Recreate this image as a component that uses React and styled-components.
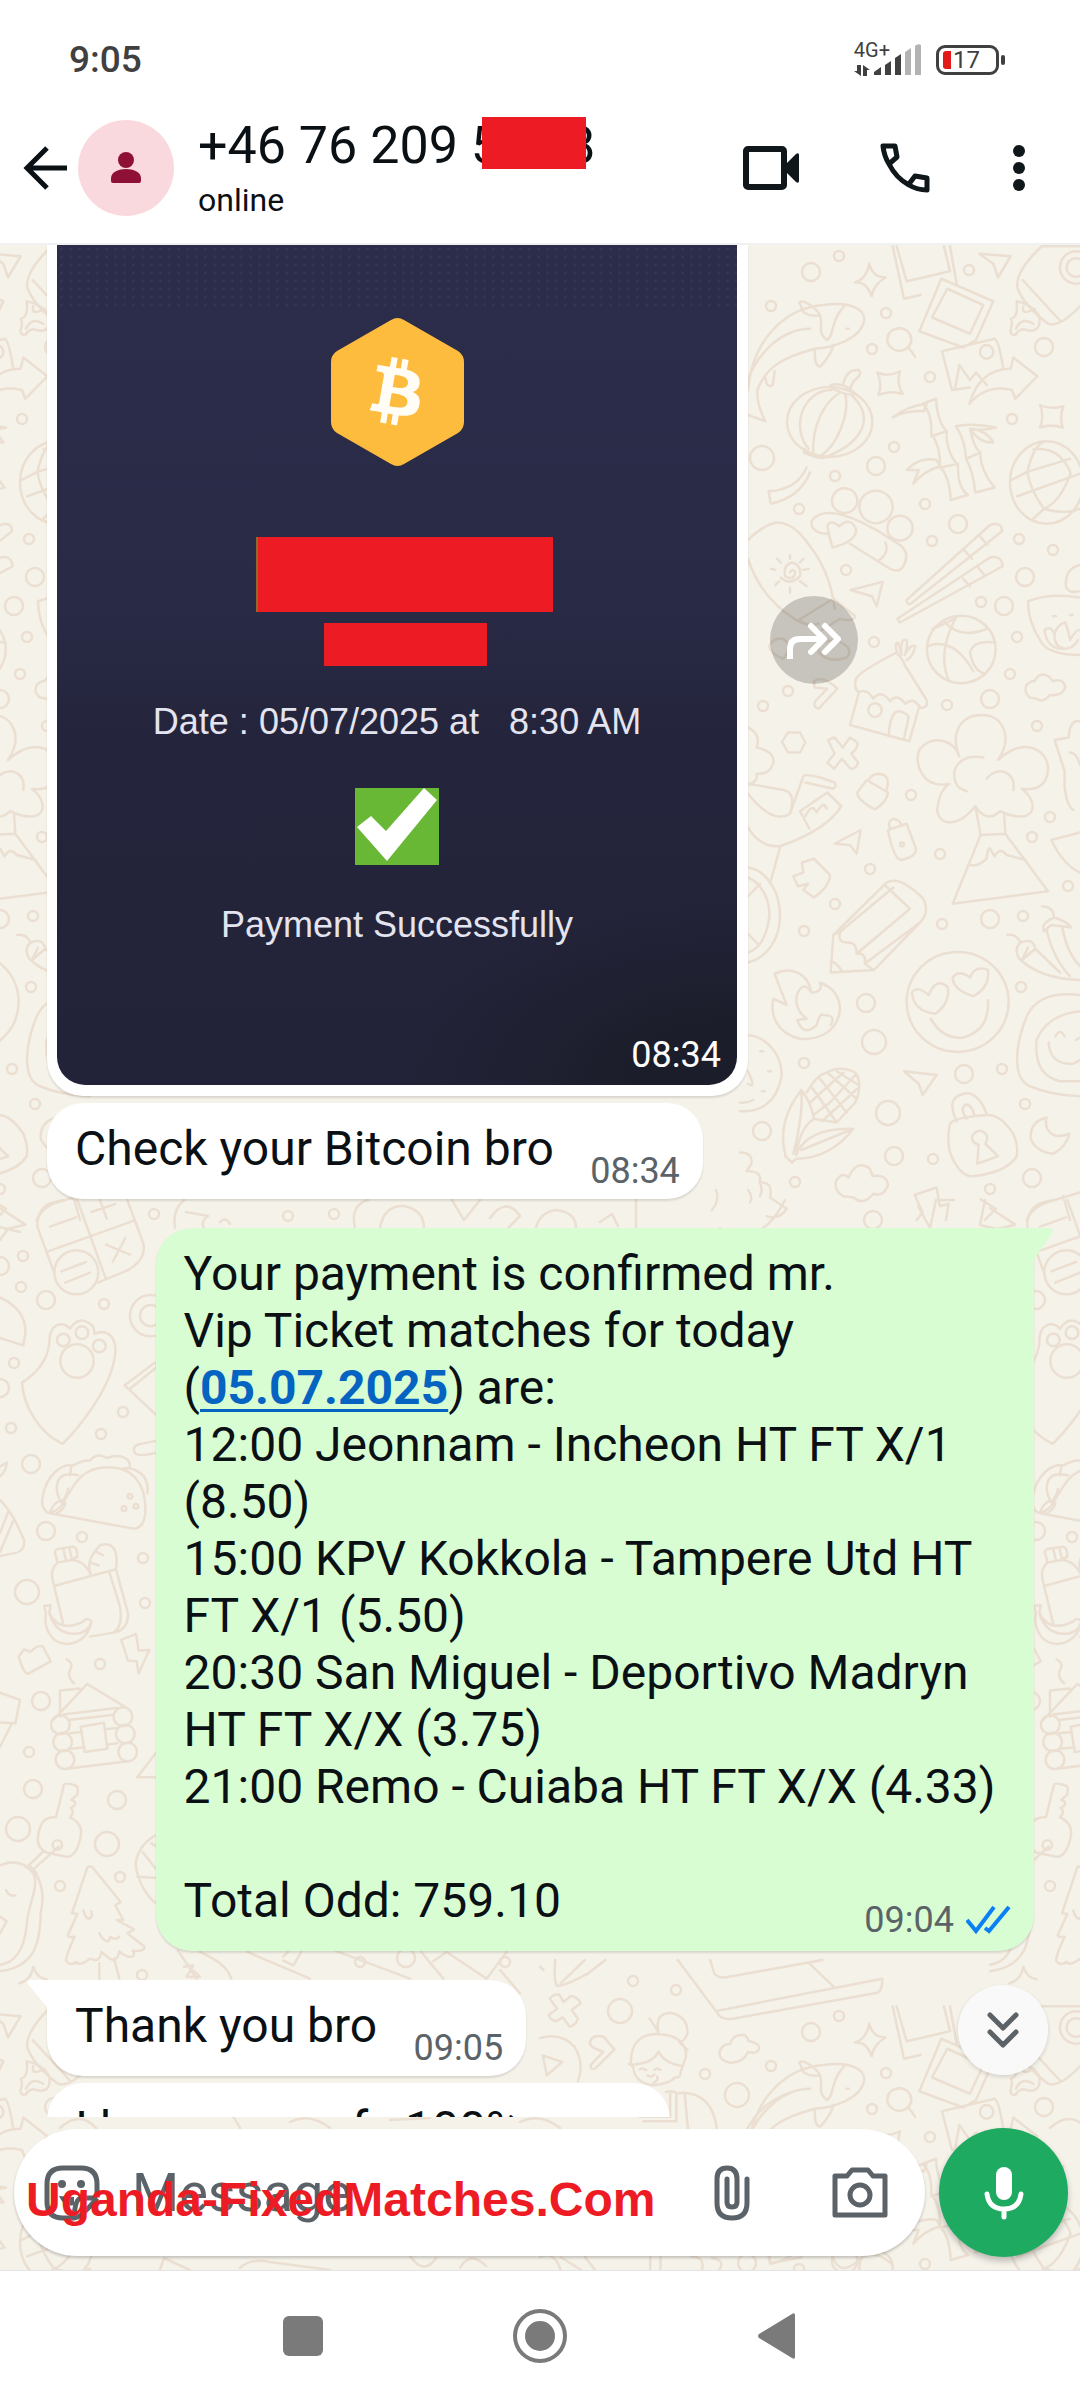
import React from "react";
import styled, { createGlobalStyle, css } from "styled-components";
import { FaBitcoin } from "react-icons/fa";

const GlobalStyle = createGlobalStyle`
  *, *::before, *::after {
    box-sizing: border-box;
  }
  body {
    margin: 0;
    background: #ffffff;
    color: #0b1014;
    font-family: Roboto, "Noto Sans", sans-serif;
  }
  button {
    display: flex;
    align-items: center;
    justify-content: center;
    padding: 0;
    border: none;
    background: transparent;
    color: inherit;
    font: inherit;
    cursor: pointer;
  }
  svg {
    display: block;
    flex-shrink: 0;
  }
`;

const Screen = styled.div`
  display: flex;
  flex-direction: column;
  height: 100vh;
  overflow: hidden;
`;

/* ---------- status bar ---------- */

const StatusBar = styled.div`
  display: flex;
  align-items: center;
  justify-content: space-between;
  height: 91px;
  padding: 28px 75px 0 69px;
  color: #404040;
`;

const Clock = styled.time`
  font-size: 37px;
  font-weight: 500;
  line-height: 40px;
`;

const StatusIcons = styled.div`
  display: flex;
  align-items: center;
  gap: 14px;
`;

const Signal = styled.div`
  display: flex;
  align-items: flex-end;
  gap: 2px;
`;

const Network = styled.div`
  display: flex;
  flex-direction: column;
  gap: 5px;
  margin: -8px -18px 0 0;
  font-size: 20px;
  line-height: 20px;
`;

const Battery = styled.div`
  position: relative;
  display: flex;
  align-items: center;
  gap: 2px;
  width: 63px;
  height: 30px;
  margin-right: 6px;
  padding-left: 4px;
  border: 3px solid #404040;
  border-radius: 9px;
  font-size: 24px;
  line-height: 24px;

  &::before {
    content: "";
    width: 8px;
    height: 18px;
    border-radius: 3px 0 0 3px;
    background: #e21b1b;
  }
  &::after {
    content: "";
    position: absolute;
    right: -9px;
    top: 7px;
    width: 4px;
    height: 10px;
    border-radius: 2px;
    background: #404040;
  }
`;

/* ---------- header ---------- */

const Header = styled.header`
  display: flex;
  align-items: center;
  height: 154px;
  padding: 2px 55px 0 22px;
  border-bottom: 2px solid #f0f1f2;
`;

const Avatar = styled.div`
  display: flex;
  align-items: center;
  justify-content: center;
  width: 96px;
  height: 96px;
  margin: 0 24px 0 10px;
  border-radius: 50%;
  background: #fad9de;
  color: #8f1036;
`;

const Contact = styled.div`
  display: flex;
  flex-direction: column;
  gap: 4px;
`;

const ContactName = styled.h1`
  display: flex;
  align-items: flex-start;
  margin: 0;
  font-size: 52px;
  font-weight: 400;
  line-height: 60px;
  white-space: pre;
`;

const Presence = styled.span`
  font-size: 32px;
  line-height: 40px;
`;

const Actions = styled.div`
  display: flex;
  align-items: center;
  gap: 79px;
  margin-left: auto;
`;

const Redaction = styled.span`
  display: block;
  width: ${props => props.$width}px;
  height: ${props => props.$height}px;
  background: #ed1c24;
  ${props =>
    props.$overlap &&
    css`
      position: relative;
      margin: 1px -20px 0 -18px;
      z-index: 1;
    `}
`;

/* ---------- conversation ---------- */

const Chat = styled.main`
  position: relative;
  display: flex;
  flex: 1;
  flex-direction: column;
  min-height: 0;
  background: #f5f2ea;
`;

const Wallpaper = styled.svg`
  position: absolute;
  inset: 0;
  width: 100%;
  height: 100%;
  fill: none;
  stroke: #ebdfd1;
  stroke-width: 2.5;
  stroke-linecap: round;
  stroke-linejoin: round;

  path,
  circle,
  ellipse {
    vector-effect: non-scaling-stroke;
  }
`;

const Messages = styled.div`
  position: relative;
  flex: 1;
  min-height: 0;
  padding: 0 46px 0 47px;
  overflow: hidden;
`;

const Row = styled.div`
  display: flex;
  align-items: center;
  justify-content: ${props => (props.$own ? "flex-end" : "flex-start")};
  gap: 22px;
  margin-top: ${props => (props.$first ? 29 : 7)}px;

  &:first-child {
    margin-top: 0;
  }
`;

const Bubble = styled.div`
  position: relative;
  max-width: 89%;
  padding: 17px 23px 22px 28px;
  border-radius: 36px;
  background: ${props => (props.$own ? "#d8fdd2" : "#ffffff")};
  box-shadow: 0 2px 2px rgba(60, 50, 40, 0.14);
  font-size: 48px;
  line-height: 57px;
  ${props =>
    props.$tail &&
    (props.$own
      ? "border-top-right-radius: 0;"
      : "border-top-left-radius: 0;")}
`;

const Tail = styled.svg`
  position: absolute;
  top: 0;
  ${props => (props.$own ? "left: 100%;" : "right: 100%;")}
`;

const Text = styled.p`
  margin: 0;
  white-space: pre-line;

  a {
    color: #0563c1;
    font-weight: 700;
    text-decoration-thickness: 3px;
    text-underline-offset: 5px;
  }
`;

// keeps the last line clear of the time stamp
const MetaSpace = styled.span`
  display: inline-block;
  width: ${props => (props.$own ? 186 : 126)}px;
`;

const Meta = styled.span`
  position: absolute;
  right: 23px;
  bottom: ${props => (props.$own ? 10 : 7)}px;
  display: flex;
  align-items: center;
  gap: 12px;
  color: #5b6368;
  font-size: 36px;
  line-height: 42px;
`;

const PhotoBubble = styled.div`
  width: 701px;
  padding: 0 11px 11px 10px;
  border-radius: 0 0 36px 36px;
  background: #ffffff;
  box-shadow: 0 2px 2px rgba(60, 50, 40, 0.14);
`;

const Receipt = styled.div`
  position: relative;
  display: flex;
  flex-direction: column;
  align-items: center;
  padding: 72px 0 136px;
  border-radius: 0 0 28px 28px;
  background:
    radial-gradient(ellipse 340px 190px at 100% 100%, #1c1d2a 30%, transparent),
    linear-gradient(#2c2d4a, #292a46 42%, #24253c 58%, #222338);
  color: #e4e4f0;
  font-family: "Liberation Sans", Arial, sans-serif;
  font-size: 36px;
  line-height: 48px;
  white-space: pre;

  &::before {
    content: "";
    position: absolute;
    inset: 0 0 auto;
    height: 66px;
    background: radial-gradient(#4a4b68 1px, transparent 2px) 0 0 / 9px 8px;
    opacity: 0.3;
  }
`;

const Coin = styled.div`
  position: relative;
  display: flex;
  align-items: center;
  justify-content: center;
  width: 133px;
  height: 150px;

  svg {
    position: absolute;
  }
  svg:last-child {
    transform: rotate(-4deg);
  }
`;

const Hidden = styled.div`
  display: flex;
  flex-direction: column;
  align-items: center;
  gap: 11px;
  margin: 70px 0 32px;
  padding-left: 17px;

  span:first-child {
    box-shadow: -2px 0 0 0 #8a6b2c;
  }
`;

const PhotoCheck = styled.div`
  margin: 42px 0 36px;
`;

const PhotoTime = styled.time`
  position: absolute;
  right: 16px;
  bottom: 9px;
  color: #ffffff;
  font-family: Roboto, sans-serif;
  font-size: 36px;
  line-height: 42px;
`;

const ForwardButton = styled.button`
  width: 88px;
  height: 88px;
  margin-bottom: 62px;
  border-radius: 50%;
  background: rgba(0, 0, 0, 0.19);
  color: #ffffff;
`;

const ScrollButton = styled.button`
  position: absolute;
  right: 32px;
  bottom: 42px;
  width: 90px;
  height: 90px;
  border-radius: 50%;
  background: rgba(250, 250, 250, 0.93);
  box-shadow: 0 2px 4px rgba(0, 0, 0, 0.14);
  color: #5b6368;
`;

/* ---------- composer ---------- */

const Composer = styled.form`
  position: relative;
  display: flex;
  align-items: center;
  gap: 14px;
  padding: 11px 12px 13px 14px;
  color: #5b6368;
`;

const Field = styled.div`
  display: flex;
  flex: 1;
  align-items: center;
  min-width: 0;
  height: 127px;
  padding: 0 37px 0 30px;
  border-radius: 64px;
  background: #ffffff;
  box-shadow: 0 2px 3px rgba(0, 0, 0, 0.2);
`;

const MessageInput = styled.input`
  flex: 1;
  min-width: 0;
  margin-left: 32px;
  padding: 0;
  border: none;
  outline: none;
  background: transparent;
  color: #0b1014;
  font-family: inherit;
  font-size: 54px;
  line-height: 60px;

  &::placeholder {
    color: #5b6368;
    opacity: 1;
  }
`;

const FieldActions = styled.div`
  display: flex;
  align-items: center;
  gap: 82px;
`;

const MicButton = styled.button`
  && {
    width: 129px;
    height: 129px;
    border-radius: 50%;
    background: #1faa61;
    box-shadow: 0 4px 6px rgba(0, 0, 0, 0.24);
    color: #ffffff;
  }
`;

const Watermark = styled.span`
  position: absolute;
  left: 26px;
  bottom: 43px;
  color: #ed1c24;
  font-family: "Liberation Sans", Arial, sans-serif;
  font-size: 48px;
  font-weight: 700;
  line-height: 54px;
  pointer-events: none;
`;

/* ---------- system navigation ---------- */

const NavBar = styled.nav`
  display: flex;
  align-items: center;
  justify-content: center;
  gap: 177px;
  height: 130px;
  border-top: 1px solid #e4e4e4;
  color: #7a7a7a;

  button {
    width: 60px;
    height: 60px;
  }
`;

/* ---------- wallpaper drawing ---------- */

const dots = [
  [811, 272, 9], [839, 256, 5], [771, 306, 5], [886, 313, 5], [969, 270, 5],
  [872, 349, 5], [1044, 347, 9], [930, 377, 5], [1012, 419, 5], [762, 458, 12],
  [876, 466, 9], [894, 447, 5], [835, 476, 5], [799, 509, 5], [925, 504, 5],
  [958, 524, 9], [932, 541, 5], [1019, 539, 5], [1053, 550, 5], [1025, 577, 9],
  [846, 570, 5], [981, 602, 5], [1004, 606, 9], [1017, 637, 5], [1010, 674, 5],
  [874, 642, 5], [947, 705, 5], [990, 699, 9], [1037, 726, 5], [788, 691, 5],
  [763, 706, 5], [911, 795, 5], [1050, 817, 5], [1032, 837, 5], [940, 854, 5],
  [870, 869, 5], [1068, 886, 5], [835, 904, 5], [804, 931, 5], [942, 924, 5],
  [990, 919, 9], [1023, 916, 5], [1021, 987, 5], [866, 1003, 9], [874, 1042, 12],
  [804, 1063, 5], [964, 1074, 9], [1002, 1069, 5], [888, 1113, 12], [762, 1131, 9],
  [1025, 1104, 5], [894, 1156, 9], [933, 1159, 5], [1032, 1178, 9], [795, 1182, 5],
  [990, 1189, 5], [154, 1214, 5], [23, 1256, 5], [21, 1287, 5], [46, 1300, 9],
  [104, 1304, 5], [14, 1363, 5], [123, 1412, 5], [11, 1428, 5], [101, 1434, 5],
  [31, 1464, 9], [46, 1531, 9], [82, 1537, 5], [143, 1558, 5], [27, 1592, 12],
  [145, 1603, 5], [100, 1664, 5], [41, 1701, 9], [0, 1266, 9], [0, 1388, 9],
  [29, 1752, 5], [33, 1789, 9], [117, 1800, 9], [18, 1829, 12], [107, 1844, 12],
  [60, 1886, 5], [120, 1877, 5], [142, 1975, 5], [406, 1958, 9], [633, 1981, 5],
  [676, 1990, 5], [620, 2011, 12], [705, 2074, 5], [737, 2095, 12], [747, 2263, 9],
  [288, 1216, 5], [334, 1214, 5], [873, 1220, 9], [360, 1962, 5], [505, 1962, 5],
];

const Doodles = () => (
  <g id="doodles">
    {dots.map(([x, y, r]) => (
      <circle key={`${x}-${y}`} cx={x} cy={y} r={r} />
    ))}
    {/* right side, upper half */}
    <g transform="translate(740 240) scale(0.3333 0.625)">
      {/* sparkles, planes */}
      <path d="M345 68Q380 62 388 38Q398 60 437 60Q402 70 395 90Q380 66 345 68ZM412 212Q445 220 480 210Q468 228 488 246Q450 240 415 248Q428 230 412 212ZM900 264Q930 272 970 266Q958 284 968 300Q930 294 900 300Q914 282 900 264Z" />
      <path d="M718 22L812 26L774 60L760 38ZM332 560L428 547L410 586L396 570ZM492 1330L590 1336L548 1368L536 1350ZM284 966L362 944L350 982L330 968ZM722 1535L768 1550L735 1568" />
      {/* koi */}
      <path d="M24 240C40 150 150 108 250 104C330 98 378 110 372 130C362 158 280 172 225 174C140 186 80 200 52 240C50 262 64 278 76 290L24 280M178 100C190 94 226 108 240 120Q215 124 192 116ZM240 120C250 136 230 150 262 160C284 152 270 130 312 106M225 174C222 194 230 204 242 202C262 190 276 180 280 168M24 222C60 176 130 142 210 142M76 220Q80 238 98 232L104 210M320 142h6" />
      {/* photos and arrow */}
      <path d="M458 10L492 94L542 88M470 10L500 66L630 50L612 10M630 10L650 70M538 146L604 62L760 98L708 160L670 172ZM576 124L622 78L730 104L690 150ZM606 178L764 158Q776 160 790 206M606 178L636 240L690 236M646 236L658 200L690 224L708 212L740 232M688 262Q720 206 812 206L820 188L892 218L826 254L816 240Q740 230 688 262Z" />
      <ellipse cx="740" cy="179" rx="20" ry="11" />
      <ellipse cx="478" cy="159" rx="36" ry="18" />
      <path d="M506 172L526 187" />
      {/* rocket */}
      <path d="M1020 10H905Q826 50 832 76Q850 104 924 134Q960 140 1020 106M848 64L962 130M830 98Q876 102 898 122Q904 150 860 144Q840 140 826 152Q806 152 814 140Q818 130 812 126Q836 124 830 98ZM850 106Q842 122 884 110M828 142Q846 122 880 134" />
      <ellipse cx="1008" cy="44" rx="48" ry="26" />
      <ellipse cx="1008" cy="44" rx="28" ry="15" />
      {/* lantern */}
      <ellipse cx="269" cy="291" rx="128" ry="56" />
      <path d="M272 232Q310 226 346 246Q330 252 272 236ZM192 334Q224 350 264 346Q250 354 192 340ZM274 240C190 240 150 300 206 334M300 244C250 260 214 300 220 344M316 246C330 280 290 330 240 346M334 248C400 280 380 320 264 346M310 230Q320 206 356 208Q370 214 340 226L330 238M200 364Q170 400 86 402L92 422Q180 412 210 372" />
      {/* bamboo */}
      <path d="M548 262L588 254Q592 290 620 306Q618 340 654 360Q652 396 684 408L632 416Q630 380 600 362Q602 330 574 310Q576 276 548 262ZM458 284Q500 266 560 262L552 274Q500 272 458 284ZM574 314L620 306M600 364L654 358M648 298Q690 292 768 300Q720 306 690 302Q700 330 720 340Q722 370 764 396L706 404Q700 370 678 350Q676 320 648 298ZM678 350L722 340M690 302Q720 326 760 324Q740 304 690 302M500 368Q540 346 590 352L600 362Q550 370 520 390L536 368Z" />
      {/* globe */}
      <ellipse cx="920" cy="388" rx="110" ry="66" />
      <path d="M862 371Q880 330 912 322M862 371Q870 400 912 430Q980 440 1020 430M862 371L815 384M862 371L990 350M880 335Q960 330 992 373Q960 420 912 430M832 410L1020 374M912 430L880 446" />
      {/* people and blanket */}
      <ellipse cx="314" cy="417" rx="38" ry="20" />
      <ellipse cx="408" cy="427" rx="50" ry="26" />
      <ellipse cx="480" cy="461" rx="38" ry="20" />
      <path d="M262 470C220 470 206 456 220 446C250 430 320 430 480 488Q510 500 492 520Q480 534 450 526L330 486M262 458Q270 446 298 458Q330 442 348 462Q352 482 278 492Q270 480 262 458ZM436 484Q450 500 414 514" />
      {/* sun and scroll */}
      <path d="M24 480Q60 460 106 452Q160 450 210 490Q270 530 284 590M24 510Q60 570 160 605Q200 620 236 614M150 504v6M150 556v8M92 526l14 2M190 528l16-2M106 552l12-6M180 546l20 8M112 510l10 6M190 510l-10 6M150 532Q160 524 166 532Q160 546 136 538Q128 520 156 516Q186 520 180 538Q150 554 122 540" />
      {/* brush under the forward button */}
      <path d="M176 608L280 574L346 602Q340 612 300 606L240 626ZM88 650Q90 662 130 670Q160 650 130 638Q100 636 88 650ZM236 650Q270 634 310 646Q340 656 320 668Q270 678 236 660ZM222 706Q250 696 292 718L236 750Q216 746 226 738L262 718L224 716Z" />
      {/* chopsticks */}
      <path d="M500 576L750 456Q786 450 786 466L512 582Q498 584 500 576ZM472 606L750 508Q786 504 788 522L480 612ZM672 496l24 14M720 474l22 14M670 542l20 12M714 524l20 12" />
      {/* basketball */}
      <ellipse cx="664" cy="655" rx="103" ry="54" />
      <path d="M562 650Q640 634 700 690M612 610Q660 640 740 622M650 602Q590 660 626 704M766 644Q700 640 690 660Q700 690 736 694M578 622Q610 616 650 604" />
      {/* tea cup */}
      <path d="M864 578Q930 564 1020 572M864 578Q864 610 900 640Q920 664 1020 664M1020 520Q974 526 978 554Q984 566 1016 562M940 602h8M990 600h8M914 624Q930 616 944 630Q954 614 976 612Q984 622 990 640Q1010 622 1020 624M914 624Q918 650 960 654Q1000 656 1014 640M944 630Q940 650 972 654" />
      {/* hut */}
      <path d="M470 660Q490 672 494 680L560 736Q566 750 540 748Q520 730 496 742Q470 724 450 738Q424 718 400 734Q380 716 356 724Q340 716 348 702Q360 690 470 660ZM358 722L330 776L508 802L538 746M446 794Q450 752 480 754Q504 758 506 764L492 798M474 664Q460 646 474 644Q482 656 484 664Q480 636 500 640Q504 652 494 664Q512 646 526 650Q520 666 500 672" />
      <ellipse cx="405" cy="752" rx="20" ry="11" />
      {/* small cloud, hexagon, cross, padlocks */}
      <path d="M870 732Q850 724 860 712Q876 704 884 706Q898 690 926 698Q936 704 938 706Q970 700 976 716Q968 730 930 728Q906 742 890 734ZM126 803L144 788H180L196 804L180 820H144ZM264 800L284 796L308 812L330 796L352 804Q356 812 334 822L354 836Q350 846 332 846L306 830L282 846L262 836L284 822Z" />
      <path d="M352 884L380 864L444 884Q440 900 404 911Q352 896 352 884ZM386 864Q400 850 432 856Q450 862 440 880M444 944L500 934L528 974Q530 986 484 992Q460 990 444 944ZM450 940Q440 930 462 926Q478 928 482 934" />
      <ellipse cx="486" cy="967" rx="6" ry="3" />
      {/* hands with box, puzzle */}
      <path d="M24 780Q64 790 50 812Q104 818 100 836Q90 856 50 854Q56 866 24 872M24 870L130 880Q170 884 150 918Q100 936 24 886M24 940Q60 972 120 970Q260 944 304 906L262 884L180 914L208 942M150 918L190 858Q200 852 284 868Q290 874 280 878L196 868M196 922Q216 900 230 916Q250 896 260 910M160 1018L190 1012L186 996L222 990L270 1016Q270 1034 222 1052L190 1040L204 1030L174 1034Z" />
      {/* volcano */}
      <path d="M658 826C630 790 660 760 726 760C790 760 820 796 774 832C860 790 930 820 924 850C918 880 870 880 846 878C900 900 890 940 780 914Q740 934 706 906C640 950 580 930 594 904Q600 880 628 870C540 880 520 830 540 814C580 790 640 800 658 826ZM730 828C660 820 620 850 656 876L680 882M740 862C770 840 830 850 820 880M706 906L722 952L638 1062L924 1042L796 950L792 916M722 952L796 950M692 1000Q710 1004 740 990Q744 970 750 974L764 986Q780 970 800 984L858 992" />
      <path d="M1020 770Q990 766 986 796L944 800L974 850Q970 900 1000 912M990 820Q1010 820 1020 840M934 960L1020 948M934 960Q970 1000 1020 1012" />
      {/* wheel */}
      <path d="M120 972L90 1030M24 1004C90 1010 120 1050 120 1080C120 1120 80 1148 24 1156M24 1020C70 1030 90 1060 88 1082C80 1120 50 1136 24 1140M24 1050L60 1030M24 1110L56 1128" />
      {/* pencil */}
      <path d="M272 1172L280 1112L440 1028Q480 1016 550 1054Q570 1076 540 1092L402 1168ZM280 1112L302 1106Q290 1124 320 1124Q350 1122 350 1142Q380 1140 374 1158L402 1168M302 1106L460 1036M350 1142L510 1070M374 1158L540 1092M434 1032L510 1070M274 1154Q290 1156 306 1170" />
      {/* flame */}
      <path d="M104 1174C160 1160 206 1176 214 1204Q250 1204 240 1188Q300 1200 300 1232C290 1270 230 1280 180 1278C110 1270 90 1240 100 1214L140 1224Q122 1200 104 1174ZM214 1204Q190 1184 172 1206Q160 1230 200 1246L172 1248Q190 1276 230 1256Q240 1236 250 1240Q290 1240 272 1256" />
      {/* heart-eyed face */}
      <ellipse cx="653" cy="1219" rx="153" ry="80" />
      <path d="M516 1204Q530 1192 566 1208Q590 1178 624 1196Q630 1222 586 1238Q520 1234 516 1204ZM638 1180Q656 1166 690 1180Q704 1160 744 1168Q750 1196 700 1210Q640 1200 638 1180ZM572 1246Q610 1280 670 1276Q750 1264 744 1216" />
      {/* chillies and onigiri */}
      <path d="M802 1112Q830 1110 842 1124Q820 1134 838 1150Q900 1182 1020 1184M842 1124Q880 1116 886 1134L846 1152L864 1132M886 1134L960 1172M906 1066Q940 1066 942 1084M912 1106Q900 1094 942 1084Q980 1090 994 1100L966 1098Q980 1140 1020 1162M912 1106L934 1096L966 1098M920 1104Q940 1150 990 1178" />
      <path d="M1020 1208Q900 1200 862 1240C830 1280 810 1340 870 1354Q930 1368 1020 1370M1020 1234Q920 1240 890 1280Q880 1336 960 1346H1020M926 1284Q930 1320 1000 1318L1020 1312M946 1274Q960 1260 974 1274M1008 1280L1020 1276" />
      {/* ladybird */}
      <path d="M24 1272C90 1276 130 1310 124 1340C110 1380 60 1396 0 1394M60 1298h10M84 1330h10M66 1362h8M24 1350Q50 1360 24 1330M0 1380Q20 1382 40 1376" />
      {/* corn */}
      <path d="M136 1464Q110 1410 184 1360Q210 1376 222 1406Q180 1420 168 1464M184 1360Q190 1400 160 1462M168 1464Q200 1420 340 1422Q270 1470 168 1470L156 1476L136 1466M184 1456L340 1422M200 1364Q230 1336 260 1332Q300 1320 346 1332Q370 1350 346 1380Q310 1400 290 1412L222 1406M216 1356L290 1412M240 1342L320 1396M262 1332L350 1374M290 1330L356 1352M220 1400L270 1380L346 1336M210 1380L310 1332M246 1410L352 1358" />
      {/* big padlock and moon */}
      <path d="M630 1414Q620 1440 630 1460Q660 1500 700 1498Q800 1492 830 1466Q836 1450 820 1430Q780 1398 740 1400Q640 1404 630 1414ZM650 1410Q620 1376 660 1368Q710 1356 740 1398M680 1406Q660 1390 674 1384Q694 1380 704 1402M712 1478L716 1448Q690 1442 698 1432Q720 1418 740 1432Q744 1442 736 1446L774 1466ZM920 1404Q870 1410 872 1438Q890 1460 940 1462Q980 1450 988 1430Q940 1440 922 1422Q914 1412 920 1404Z" />
      <path d="M310 1530Q280 1520 288 1506Q306 1490 326 1500Q350 1470 390 1486L398 1498Q440 1494 444 1512Q430 1532 400 1526Q370 1546 340 1532ZM0 1460Q40 1460 34 1478L20 1490Q66 1488 60 1508Q100 1506 90 1532L140 1550Q120 1568 80 1562M24 1520Q40 1530 30 1540M60 1508Q70 1520 60 1530M524 1528L590 1516L600 1546L626 1542L618 1568M524 1528L548 1556L530 1568M860 1568Q880 1546 920 1540L1020 1524M970 1530L990 1568" />
    </g>
    {/* left column */}
    <g transform="translate(0 1200) scale(0.3333)">
      <path d="M0 24L76 74L24 86L0 120" />
      <path d="M112 80Q110 30 150 10L190 0M112 80L162 218M150 10M232 0L318 238M142 155L402 62M382 0L430 130Q440 180 380 212L294 248M150 80L228 52M274 36L346 12M300 0L320 56M318 134L390 164M376 114L338 186M184 214L258 186M196 248L270 218" />
      <circle cx="229" cy="217" r="66" />
      <path d="M0 292Q80 330 76 400L70 436L0 414" />
      {/* paw */}
      <path d="M66 548Q140 500 148 430C146 370 190 360 210 386Q240 340 280 380L284 402C320 384 350 410 346 460C336 560 240 680 188 732C120 700 70 620 66 548Z" />
      <circle cx="190" cy="420" r="19" />
      <circle cx="246" cy="398" r="19" />
      <circle cx="298" cy="438" r="19" />
      <circle cx="231" cy="483" r="50" />
      <circle cx="452" cy="347" r="62" />
      <circle cx="452" cy="347" r="32" />
      <path d="M530 560L464 488L374 556L470 646M388 568L470 502M530 710L412 734Q394 744 406 760Q416 772 480 756M0 800L20 788Q20 810 0 830" />
      {/* taco */}
      <path d="M150 940L400 986Q430 986 436 940C440 840 390 800 320 802C240 804 220 860 192 904Q180 930 150 940Q120 930 128 890C140 820 190 790 220 796Q250 780 270 782Q290 756 320 774Q360 760 380 778Q394 790 388 804Q450 820 442 880M214 798L210 826M234 826Q180 814 172 850Q166 880 184 906Q200 890 204 866M150 938Q160 906 184 902L196 910Q190 930 170 940M388 804L366 806" />
      <circle cx="390" cy="889" r="7" />
      <circle cx="408" cy="919" r="7" />
      <circle cx="372" cy="926" r="7" />
      <path d="M0 900Q40 940 72 1020Q76 1050 50 1058L0 1068M40 962L0 1056M24 936L0 1000" />
      {/* backpack and banana */}
      <path d="M172 1084L164 1056Q166 1048 178 1046L220 1040Q232 1042 232 1070L214 1080L172 1088ZM190 1048L198 1082M208 1044L216 1078M172 1088Q150 1110 158 1140L190 1274M162 1158L348 1108M214 1080Q250 1080 272 1122M272 1122Q256 1080 300 1036Q350 1020 350 1086L348 1108L384 1240Q386 1290 340 1298L270 1310M328 1116L360 1220Q370 1280 340 1298M290 1056L310 1066M276 1090L296 1096M132 1218L152 1216L148 1240Q180 1300 250 1264Q262 1250 274 1264C270 1300 240 1332 200 1332C150 1330 130 1280 138 1240ZM148 1240Q170 1310 240 1300Q270 1290 274 1264" />
      {/* cabin */}
      <path d="M56 1370L72 1348L90 1356L110 1340L128 1338L152 1384L84 1422Q70 1420 56 1370ZM200 1378Q222 1390 210 1410Q200 1430 222 1450M364 1320L408 1302L416 1352L448 1350L416 1420L410 1384L384 1382ZM262 1452L160 1560M262 1452L374 1520M180 1550L180 1472L240 1466M190 1544L350 1524M0 1478L60 1500L46 1570L0 1568M36 1570L0 1640" />
    </g>
    <g transform="translate(0 1700) scale(0.3333)">
      <circle cx="181" cy="74" r="28" />
      <circle cx="188" cy="126" r="28" />
      <circle cx="195" cy="179" r="28" />
      <circle cx="369" cy="50" r="28" />
      <circle cx="376" cy="102" r="28" />
      <circle cx="383" cy="156" r="28" />
      <path d="M206 60L342 44M208 100L246 96M214 146L254 142M316 88L350 84M320 134L352 130M200 206L384 184M242 80L312 68L322 146L254 156ZM470 156L412 232H470" />
      {/* key */}
      <path d="M192 254Q196 246 230 258Q236 262 232 284L214 300Q230 304 224 316L212 324Q226 336 210 352Q250 370 242 410Q230 470 200 470L140 458Q108 440 114 410C120 360 140 350 168 352ZM128 456L86 496L100 508L176 440M100 508L110 520" />
      <circle cx="172" cy="435" r="14" />
      <path d="M0 496Q60 470 100 520C120 560 80 620 80 680C70 760 40 790 0 794M100 512Q140 560 122 640C120 720 110 800 0 814M18 570Q26 590 46 586M0 650L20 664L0 700" />
      {/* fir tree */}
      <path d="M262 502Q274 494 284 510L362 606L346 616L370 660H350L402 688L382 700L434 740Q434 756 398 752Q410 774 384 770Q366 764 358 754Q352 788 330 776L304 756Q300 790 270 776Q240 800 230 786Q210 800 198 782Q200 760 224 710Q196 714 206 700L232 642L216 640ZM298 790V836M342 776L358 836M250 632Q256 656 268 656Q280 650 274 634M298 700Q310 726 326 724Q330 704 336 714Q350 720 358 710" />
      <path d="M470 404C420 430 400 480 410 510C420 560 450 600 470 610M428 456L470 510M412 530L470 534M470 440L454 430M58 850Q94 840 100 800Q112 836 140 838" />
      <path d="M534 752L590 836M552 800L580 796L560 830H600L580 812M600 756Q680 790 694 836M742 756L930 836M850 770L864 756M850 782L880 796L904 756M1006 752L1230 836M1264 756L1330 836M1340 756L1460 836L1520 756M1500 810L1560 880M1340 756L1300 784" />
    </g>
    {/* lower middle */}
    <g transform="translate(540 1960) scale(0.3444 0.3333)">
      <path d="M0 20L10 30M44 0Q40 60 48 76Q60 84 140 40L190 0M60 70L130 0M400 0L520 166Q530 180 560 176L980 98Q994 90 994 56L516 152M494 0L506 40Q520 56 540 52L820 0M780 8L852 80" />
      <path d="M28 116Q40 100 56 104L68 126L90 108Q112 112 118 130L92 150L110 176Q104 196 86 200L66 172L46 184Q28 180 26 164L50 146ZM0 234Q60 216 100 260Q130 310 110 364M8 286L64 306L20 346ZM144 250Q150 222 184 230L216 268L160 326Q144 330 148 314L184 276L152 262ZM530 300Q516 284 524 270Q530 252 552 252Q560 220 596 226Q606 236 604 242Q640 250 636 266Q630 284 604 276Q590 310 550 308Z" />
      {/* grandmother */}
      <path d="M258 312Q270 314 272 330Q280 370 330 376Q380 370 392 352Q410 354 408 336M264 312Q262 222 340 222Q426 226 424 290L408 336M270 314Q330 310 344 274Q360 310 412 318M318 176L344 216Q332 160 380 158Q430 170 428 220Q420 244 404 246L428 270M290 328Q298 322 308 330M332 330Q340 322 350 330M312 346Q320 354 332 344M340 350Q346 360 330 368M366 396Q380 390 400 400Q500 390 514 510M290 470H378V400M300 484H396V400M420 400L430 510M600 510Q640 430 720 400" />
      <path d="M0 892Q40 870 60 930M60 892L120 930M130 890L160 930M320 890V930M350 890V930M440 890Q480 890 470 930M500 895Q540 900 520 930M664 892L668 910L760 892M850 890Q870 950 920 905Q960 860 1020 910" />
    </g>
    {/* thin strips between bubbles */}
    <path d="M175 1228Q172 1210 184 1200M186 1212L208 1216Q200 1222 204 1228M220 1222Q226 1216 230 1224M355 1228Q350 1205 368 1200M380 1228Q384 1205 404 1206Q424 1210 424 1228M452 1200L464 1220L480 1200M490 1218Q506 1196 520 1216L508 1228M536 1228Q540 1212 556 1210Q576 1212 576 1228M600 1222L612 1214L618 1226M636 1200V1228M712 1210Q720 1200 716 1190M720 1228Q760 1250 785 1200M918 1206L930 1228L936 1200L954 1200M985 1200L980 1225L1010 1232" />
    <path d="M60 2128Q80 2110 96 2128M240 2128Q232 2112 224 2108M290 2122Q310 2112 330 2128M390 2120L430 2118M520 2122Q540 2112 560 2128M160 2270L164 2258L190 2270M240 2268Q250 2258 270 2262L330 2270M410 2256Q424 2276 436 2258M460 2268Q470 2250 486 2266" />
  </g>
);

const ChatWallpaper = () => (
  <Wallpaper aria-hidden="true">
    <g transform="translate(0 -245)">
      <Doodles />
      <use href="#doodles" x="-990" />
      <use href="#doodles" x="990" />
      <use href="#doodles" y="1760" />
      <use href="#doodles" x="-990" y="1760" />
    </g>
  </Wallpaper>
);

/* ---------- icons ---------- */

const SignalBars = () => (
  <svg width="48" height="32" viewBox="0 0 48 32">
    <path fill="#404040" d="M0 31V28L7 23V31ZM11 31V21L17 17V31ZM21 31V14L27 10V31Z" />
    <path fill="#b3b3b3" d="M31 31V8L37 4V31ZM41 31V2Q44 -1 47 1V31Z" />
  </svg>
);

const DataArrows = () => (
  <svg width="16" height="11" viewBox="0 0 16 11" fill="#404040">
    <path d="M3 0H7V11L0 6H3ZM9 0L16 5H13V11H9Z" />
  </svg>
);

const BackIcon = () => (
  <svg width="46" height="46" viewBox="0 0 46 46" fill="none" stroke="#0b1014" strokeWidth="5">
    <path d="M45 23H5M25 3L5 23L25 43" />
  </svg>
);

const PersonIcon = () => (
  <svg width="32" height="32" viewBox="0 0 32 32" fill="currentColor">
    <circle cx="16" cy="8" r="8" />
    <path d="M1 29V26C1 20 9 17 16 17S31 20 31 26V29Q31 31 29 31H3Q1 31 1 29Z" />
  </svg>
);

const VideoIcon = () => (
  <svg width="58" height="46" viewBox="0 0 58 46">
    <rect x="5" y="4" width="38" height="38" rx="2" fill="none" stroke="#0f171b" strokeWidth="6" />
    <path fill="#0f171b" d="M45 19L55 9Q58 7 58 10V36Q58 39 55 37L45 27Z" />
  </svg>
);

const PhoneIcon = () => (
  <svg width="56" height="52" viewBox="0 0 56 52" fill="none" stroke="#0f171b" strokeWidth="5" strokeLinejoin="round">
    <path d="M5 4H17L19 15L11 22Q6 14 5 4ZM11 22Q18 36 31 43Q39 48 49 48V36L37 34L31 42" />
  </svg>
);

const MoreIcon = () => (
  <svg width="12" height="46" viewBox="0 0 12 46" fill="#0f171b">
    <circle cx="6" cy="6" r="6" />
    <circle cx="6" cy="23" r="6" />
    <circle cx="6" cy="40" r="6" />
  </svg>
);

const ForwardIcon = () => (
  <svg width="56" height="38" viewBox="0 0 56 38" fill="none" stroke="currentColor" strokeWidth="6" strokeLinecap="round" strokeLinejoin="round">
    <path strokeLinecap="butt" d="M4 38V28Q4 18 14 18H35" />
    <path d="M25 5L38 18L25 31M39 5L52 18L39 31" />
  </svg>
);

const ChevronsDown = () => (
  <svg width="32" height="36" viewBox="0 0 32 36" fill="none" stroke="currentColor" strokeWidth="5" strokeLinecap="round" strokeLinejoin="round">
    <path d="M3 3L16 16L29 3M3 20L16 33L29 20" />
  </svg>
);

const ReadChecks = () => (
  <svg width="45" height="28" viewBox="0 0 45 28" fill="none" stroke="#0b80f5" strokeWidth="4">
    <path d="M1 14L10 25L28 1M19 22L23 25L43 1" />
  </svg>
);

const StickerIcon = () => (
  <svg width="56" height="56" viewBox="0 0 56 56" fill="none" stroke="currentColor" strokeWidth="5">
    <path d="M53 31V19Q53 3 37 3H19Q3 3 3 19V37Q3 53 19 53H30Q37 53 53 33M30 53Q31 34 37 33H53" />
    <path d="M15 31Q20 43 30 40V32Z" fill="currentColor" stroke="none" />
    <circle cx="18" cy="19" r="4" fill="currentColor" stroke="none" />
    <circle cx="37" cy="19" r="4" fill="currentColor" stroke="none" />
  </svg>
);

const ClipIcon = () => (
  <svg width="36" height="56" viewBox="0 0 36 56" fill="none" stroke="currentColor" strokeWidth="5" strokeLinecap="round">
    <path d="M33 14V38Q33 53 18 53T3 38V14Q3 3 13 3T23 14V37Q23 42 18 42T13 37V14" />
  </svg>
);

const CameraIcon = () => (
  <svg width="56" height="52" viewBox="0 0 56 52" fill="none" stroke="currentColor" strokeWidth="5" strokeLinejoin="round">
    <path d="M3 9H15L20 3H36L41 9H53V48H3Z" />
    <circle cx="28" cy="28" r="10" />
  </svg>
);

const MicIcon = () => (
  <svg width="40" height="54" viewBox="0 0 40 54" fill="none" stroke="currentColor" strokeWidth="5" strokeLinecap="round">
    <rect x="12" y="1" width="16" height="33" rx="8" fill="currentColor" stroke="none" />
    <path d="M3 28Q5 43 20 43T37 28M20 43V51" />
  </svg>
);

const CheckBox = () => (
  <svg width="84" height="77" viewBox="0 0 84 77">
    <path fill="#68b735" d="M0 0H84V77H0Z" />
    <path fill="#ffffff" d="M2 39L16 28L31 43L69 0L82 12L32 73Z" />
  </svg>
);

/* ---------- parts ---------- */

function Message(props) {
  const { own, tail, time, children } = props;

  return (
    <Row $own={own} $first={tail}>
      <Bubble $own={own} $tail={tail}>
        {tail && own && (
          <Tail $own width="19" height="32" viewBox="0 0 19 32" fill="#d8fdd2">
            <path d="M0 0H16Q20 1 18 6L0 31Z" />
          </Tail>
        )}
        {tail && !own && (
          <Tail width="20" height="27" viewBox="0 0 20 27" fill="#ffffff">
            <path d="M20 0H2Q-1 1 1 4L20 27Z" />
          </Tail>
        )}
        <Text>
          {children}
          <MetaSpace $own={own} />
        </Text>
        <Meta $own={own}>
          <time>{time}</time>
          {own && <ReadChecks />}
        </Meta>
      </Bubble>
    </Row>
  );
}

function PaymentPhoto() {
  return (
    <Row>
      <PhotoBubble>
        <Receipt>
          <Coin>
            <svg width="133" height="150" viewBox="0 0 133 150" fill="#fdbc3e">
              <path d="M60 3Q66.500 -1 73 3L127 34Q133 38 133 45V105Q133 112 127 116L73 147Q66.500 151 60 147L6 116Q0 112 0 105V45Q0 38 6 34Z" />
              <circle cx="66" cy="75" r="48" fill="#fffdf5" />
            </svg>
            <FaBitcoin size={112} color="#fdbc3e" />
          </Coin>
          <Hidden>
            <Redaction $width={295} $height={75} />
            <Redaction $width={163} $height={43} />
          </Hidden>
          <span>Date : 05/07/2025 at   8:30 AM</span>
          <PhotoCheck>
            <CheckBox />
          </PhotoCheck>
          <span>Payment Successfully</span>
          <PhotoTime>08:34</PhotoTime>
        </Receipt>
      </PhotoBubble>
      <ForwardButton aria-label="Forward">
        <ForwardIcon />
      </ForwardButton>
    </Row>
  );
}

export default function App() {
  return (
    <Screen>
      <GlobalStyle />
      <StatusBar>
        <Clock>9:05</Clock>
        <StatusIcons>
          <Signal>
            <Network>
              <span>4G+</span>
              <DataArrows />
            </Network>
            <SignalBars />
          </Signal>
          <Battery>17</Battery>
        </StatusIcons>
      </StatusBar>

      <Header>
        <button aria-label="Back">
          <BackIcon />
        </button>
        <Avatar>
          <PersonIcon />
        </Avatar>
        <Contact>
          <ContactName>
            +46 76 209 5
            <Redaction $width={104} $height={52} $overlap />8
          </ContactName>
          <Presence>online</Presence>
        </Contact>
        <Actions>
          <button aria-label="Video call">
            <VideoIcon />
          </button>
          <button aria-label="Call">
            <PhoneIcon />
          </button>
          <button aria-label="More options">
            <MoreIcon />
          </button>
        </Actions>
      </Header>

      <Chat>
        <ChatWallpaper />
        <Messages>
          <PaymentPhoto />
          <Message time="08:34">Check your Bitcoin bro</Message>
          <Message own tail time="09:04">
            {"Your payment is confirmed mr.\nVip Ticket matches for today ("}
            <a href="#date">05.07.2025</a>
            {`) are:
              12:00 Jeonnam - Incheon HT FT X/1 (8.50)
              15:00 KPV Kokkola - Tampere Utd HT FT X/1 (5.50)
              20:30 San Miguel - Deportivo Madryn HT FT X/X (3.75)
              21:00 Remo - Cuiaba HT FT X/X (4.33)

              Total Odd: 759.10`}
          </Message>
          <Message tail time="09:05">Thank you bro</Message>
          <Message time="09:05">I have you safe 100%</Message>
          <ScrollButton aria-label="Scroll to latest">
            <ChevronsDown />
          </ScrollButton>
        </Messages>

        <Composer onSubmit={event => event.preventDefault()}>
          <Field>
            <button type="button" aria-label="Stickers">
              <StickerIcon />
            </button>
            <MessageInput type="text" placeholder="Message" aria-label="Message" />
            <FieldActions>
              <button type="button" aria-label="Attach">
                <ClipIcon />
              </button>
              <button type="button" aria-label="Camera">
                <CameraIcon />
              </button>
            </FieldActions>
          </Field>
          <MicButton type="button" aria-label="Voice message">
            <MicIcon />
          </MicButton>
          <Watermark>Uganda-FixedMatches.Com</Watermark>
        </Composer>
      </Chat>

      <NavBar>
        <button aria-label="Recent apps">
          <svg width="40" height="40" fill="currentColor">
            <rect width="40" height="40" rx="6" />
          </svg>
        </button>
        <button aria-label="Home">
          <svg width="56" height="56" viewBox="0 0 56 56" fill="currentColor">
            <circle cx="28" cy="28" r="25" fill="none" stroke="currentColor" strokeWidth="4" />
            <circle cx="28" cy="28" r="15" />
          </svg>
        </button>
        <button aria-label="Back">
          <svg width="38" height="46" viewBox="0 0 38 46" fill="currentColor">
            <path d="M37 2V44Q37 47 34 45L1 25Q-1 23 1 21L34 1Q37 -1 37 2Z" />
          </svg>
        </button>
      </NavBar>
    </Screen>
  );
}
